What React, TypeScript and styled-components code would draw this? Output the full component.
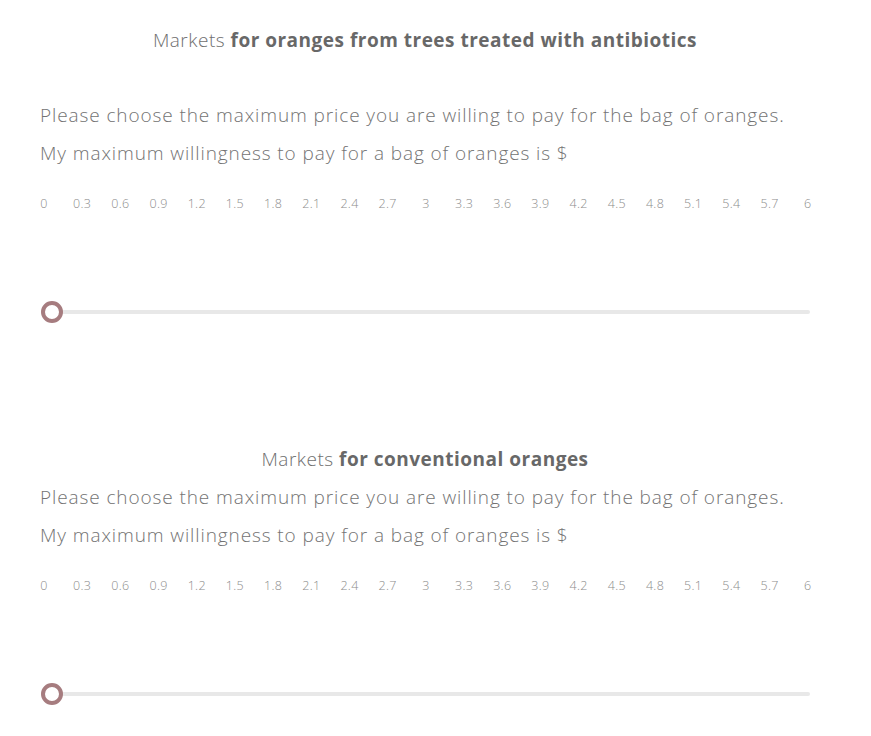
import React from 'react';
import styled, { createGlobalStyle } from 'styled-components';

const GlobalStyle = createGlobalStyle`
  body {
    margin: 0;
    background: #fff;
    font-family: 'Open Sans', 'Liberation Sans', sans-serif;
  }
`;

const Page = styled.main`
  width: 770px;
  padding: 21px 0 0 40px;
`;

const Section = styled.section<{ $gap: number }>`
  margin-bottom: ${(p) => p.$gap}px;
`;

const Title = styled.h2<{ $spaced?: boolean }>`
  margin: 0 0 ${(p) => (p.$spaced ? 37 : 0)}px;
  text-align: center;
  font-size: 19px;
  letter-spacing: 0.5px;
  line-height: 38px;
  font-weight: 300;
  color: #6f6f6f;
  b {
    font-weight: 700;
    color: #686868;
  }
`;

const Text = styled.p`
  margin: 0;
  font-size: 19px;
  letter-spacing: 0.9px;
  line-height: 38px;
  font-weight: 300;
  color: #737373;
`;

const Ticks = styled.div`
  margin: 22px 0 0;
  display: flex;
  justify-content: space-between;
`;

const Tick = styled.span`
  width: 20px;
  margin: 0 -8px 0 -6px;
  text-align: center;
  font-size: 12.5px;
  letter-spacing: 0.3px;
  line-height: 20px;
  font-weight: 300;
  color: #8c8c8c;
`;

const Slider = styled.div`
  position: relative;
  margin: 86px 0 0 4px;
  height: 24px;
  display: flex;
  align-items: center;
`;

const Track = styled.div`
  flex: 1;
  height: 4px;
  border-radius: 2px;
  background: #e8e8e8;
`;

const Thumb = styled.div`
  position: absolute;
  left: -3px;
  top: 1px;
  box-sizing: border-box;
  width: 22px;
  height: 22px;
  border-radius: 50%;
  border: 4px solid #a67c7f;
  background: #fff;
`;

const ticks = Array.from({ length: 21 }, (_, i) => String(Math.round(i * 3) / 10));

function Market({ title, first }: { title: string; first?: boolean }) {
  return (
    <Section $gap={first ? 116 : 0}>
      <Title $spaced={first}>
        Markets <b>{title}</b>
      </Title>
      <Text>Please choose the maximum price you are willing to pay for the bag of oranges.</Text>
      <Text>My maximum willingness to pay for a bag of oranges is $</Text>
      <Ticks>
        {ticks.map((t) => (
          <Tick key={t}>{t}</Tick>
        ))}
      </Ticks>
      <Slider>
        <Track />
        <Thumb />
      </Slider>
    </Section>
  );
}

export default function App() {
  return (
    <Page>
      <GlobalStyle />
      <Market first title="for oranges from trees treated with antibiotics" />
      <Market title="for conventional oranges" />
    </Page>
  );
}
